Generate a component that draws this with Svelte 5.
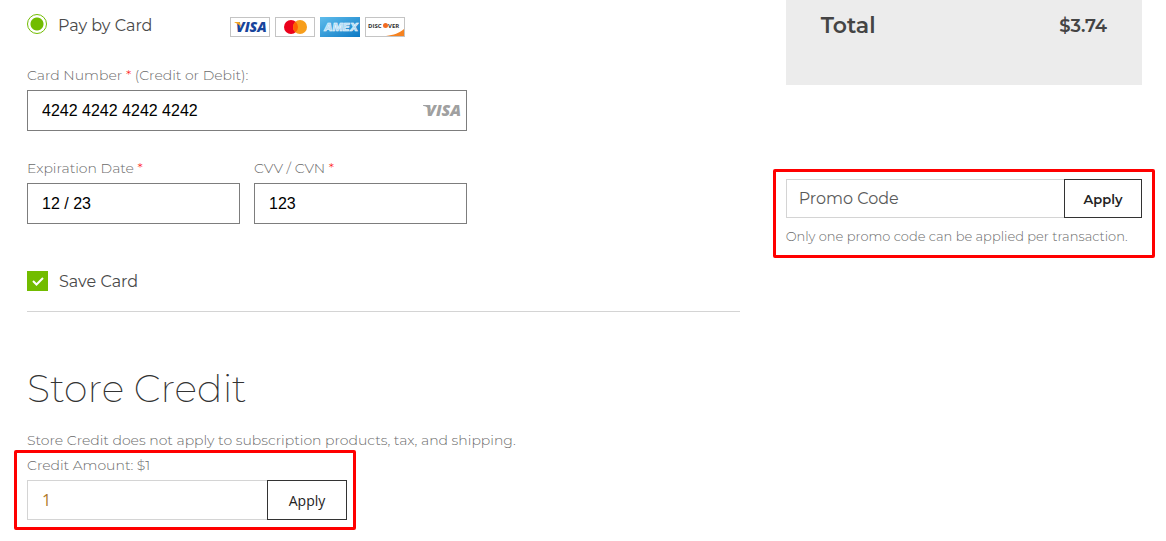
<script>
  let payMethod = $state('card');
  let cardNumber = $state('4242 4242 4242 4242');
  let expiration = $state('12 / 23');
  let cvv = $state('123');
  let saveCard = $state(true);
  let creditAmount = $state('1');
  let promoCode = $state('');

  const total = '$3.74';
  const availableCredit = '$1';
</script>

<div class="checkout">
  <main class="payment">
    <div class="method">
      <label class="choice">
        <input type="radio" name="method" value="card" bind:group={payMethod} />
        <span>Pay by Card</span>
      </label>

      <div class="brands">
        <svg class="brand" viewBox="0 0 40 20" role="img" aria-label="Visa">
          <rect x=".5" y=".5" width="39" height="19" fill="#fff" stroke="#c4c4c4" />
          <text x="6" y="15" class="visa" fill="#17449b">VISA</text>
          <path d="M4.500 5h5l2 5.500C9.500 8 7 6.300 4.500 5.600z" fill="#f7a823" />
        </svg>
        <svg class="brand" viewBox="0 0 40 20" role="img" aria-label="Mastercard">
          <rect x=".5" y=".5" width="39" height="19" fill="#fff" stroke="#c4c4c4" />
          <circle cx="16" cy="10" r="7" fill="#eb001b" />
          <circle cx="25" cy="10" r="7" fill="#f79e1b" />
          <path d="M20.500 4.640a7 7 0 0 1 0 10.720a7 7 0 0 1 0-10.720z" fill="#ff5f00" />
        </svg>
        <svg class="brand" viewBox="0 0 40 20" role="img" aria-label="American Express">
          <defs>
            <linearGradient id="amex" x1="0" y1="0" x2="1" y2="1">
              <stop offset="0" stop-color="#5fbdec" />
              <stop offset="1" stop-color="#0c79c4" />
            </linearGradient>
          </defs>
          <rect width="40" height="20" fill="url(#amex)" />
          <text x="4" y="14" class="amex">AMEX</text>
        </svg>
        <svg class="brand" viewBox="0 0 40 20" role="img" aria-label="Discover">
          <rect x=".5" y=".5" width="39" height="19" fill="#fff" stroke="#c4c4c4" />
          <path d="M39 12v7H21c8-1 13-3 18-7z" fill="#f58220" />
          <text x="3" y="11" class="discover">DISC</text>
          <circle cx="20.500" cy="8.500" r="2.500" fill="#f26b21" />
          <text x="23" y="11" class="discover">VER</text>
        </svg>
      </div>
    </div>

    <div class="card-fields">
      <div class="field wide">
        <label for="card-number">Card Number <em>*</em> (Credit or Debit):</label>
        <div class="stack">
          <input id="card-number" type="text" bind:value={cardNumber} />
          <svg class="detected" viewBox="0 0 46 28" role="img" aria-label="Visa">
            <text x="5" y="19" class="visa" fill="#a0a0a0">VISA</text>
            <path d="M2 8h6l2.500 7C9 11.500 6 9.500 2 8.700z" fill="#a0a0a0" />
          </svg>
        </div>
      </div>
      <div class="field">
        <label for="expiration">Expiration Date <em>*</em></label>
        <input id="expiration" type="text" bind:value={expiration} />
      </div>
      <div class="field">
        <label for="cvv">CVV / CVN <em>*</em></label>
        <input id="cvv" type="text" bind:value={cvv} />
      </div>
    </div>

    <label class="choice save">
      <span class="tick">
        <input type="checkbox" bind:checked={saveCard} />
        {#if saveCard}
          <svg viewBox="0 0 21 20" aria-hidden="true">
            <path d="M6 10l3.500 3.500L16 7" fill="none" stroke="#fff" stroke-width="2" />
          </svg>
        {/if}
      </span>
      <span>Save Card</span>
    </label>

    <hr />

    <section>
      <h2>Store Credit</h2>
      <p class="note">Store Credit does not apply to subscription products, tax, and shipping.</p>
      <div class="callout credit">
        <label for="credit">Credit Amount: {availableCredit}</label>
        <div class="apply-row">
          <input id="credit" type="text" bind:value={creditAmount} />
          <button type="button">Apply</button>
        </div>
      </div>
    </section>
  </main>

  <aside>
    <div class="summary">
      <span class="total">Total</span>
      <span class="amount">{total}</span>
    </div>

    <div class="callout promo">
      <div class="apply-row">
        <input type="text" placeholder="Promo Code" aria-label="Promo Code" bind:value={promoCode} />
        <button type="button">Apply</button>
      </div>
      <p>Only one promo code can be applied per transaction.</p>
    </div>
  </aside>
</div>

<style>
  :global(body) {
    margin: 0;
    background: #fff;
  }

  .checkout {
    display: grid;
    grid-template-columns: 2fr 1fr;
    column-gap: 46px;
    padding: 0 24px 0 27px;
    font-family: Montserrat, Inter, 'Open Sans', sans-serif;
    font-weight: 300;
    font-size: 14px;
    line-height: 20px;
    color: #6b6b6b;
  }

  .checkout * {
    box-sizing: border-box;
  }

  .payment {
    padding-top: 11px;
  }

  .method {
    display: flex;
    align-items: center;
    gap: 78px;
  }

  .choice {
    display: flex;
    align-items: center;
    gap: 11px;
    font-size: 16px;
    line-height: 22px;
    font-weight: 400;
    color: #4a4a4a;
  }

  .choice > span:last-child {
    padding-top: 3px;
  }

  input[type='radio'] {
    appearance: none;
    width: 20px;
    height: 20px;
    margin: 0;
    border: 1px solid #72bc00;
    border-radius: 50%;
    background: #fff;
  }

  input[type='radio']:checked {
    background: radial-gradient(circle, #72bc00 6px, #fff 7px);
  }

  .brands {
    display: flex;
    gap: 5px;
    padding-top: 6px;
  }

  .brand {
    display: block;
    width: 40px;
    height: 20px;
  }

  .visa {
    font: italic 800 14px 'Open Sans', sans-serif;
  }

  .detected .visa {
    font-size: 16px;
  }

  .amex {
    font: italic 800 11px Inter, 'Open Sans', sans-serif;
    fill: #a9d8f5;
    stroke: #fff;
    stroke-width: 0.5px;
  }

  .discover {
    font: 700 6px 'Open Sans', sans-serif;
    fill: #333;
  }

  .card-fields {
    display: grid;
    grid-template-columns: 1fr 1fr;
    gap: 27px 14px;
    max-width: 440px;
    margin-top: 28px;
  }

  .wide {
    grid-column: 1 / -1;
  }

  .field label,
  .credit label {
    display: block;
    margin-bottom: 5px;
  }

  em {
    color: #f22;
    font-style: normal;
  }

  input[type='text'] {
    width: 100%;
    height: 41px;
    padding: 0 14px;
    border: 1px solid #7d7d7d;
    border-radius: 0;
    background: #fff;
    color: #000;
    font: 16px 'Liberation Sans', Arial, sans-serif;
  }

  .stack,
  .tick {
    display: grid;
    align-items: center;
  }

  .stack > *,
  .tick > * {
    grid-area: 1 / 1;
  }

  .detected {
    width: 46px;
    height: 28px;
    justify-self: end;
  }

  .save {
    width: fit-content;
    margin-top: 44px;
  }

  input[type='checkbox'] {
    appearance: none;
    width: 21px;
    height: 20px;
    margin: 0;
    border: 1px solid #72bc00;
  }

  input[type='checkbox']:checked {
    background: #72bc00;
  }

  .tick svg {
    width: 21px;
    height: 20px;
    pointer-events: none;
  }

  hr {
    margin: 18px 0 53px;
    border: 0;
    border-top: 1px solid #d4d4d4;
  }

  h2 {
    margin: 0 0 17px;
    font-size: 38px;
    line-height: 48px;
    font-weight: 200;
    color: #333;
  }

  p {
    margin: 0;
  }

  .callout {
    border: 3px solid #f00;
    border-radius: 2px;
  }

  .credit {
    width: 342px;
    max-width: 100%;
    margin-left: -13px;
    padding: 2px 6px 7px 10px;
  }

  .apply-row {
    display: flex;
  }

  .apply-row input[type='text'] {
    flex: 1;
    min-width: 0;
    height: 40px;
    border-color: #d4d4d4;
    border-right: 0;
  }

  .apply-row button {
    width: 80px;
    padding: 0;
    border: 1px solid #333;
    background: #fff;
    color: #222;
    font: 14px 'Open Sans', sans-serif;
  }

  .credit input[type='text'] {
    font-family: 'Open Sans', sans-serif;
    color: #b07a2c;
  }

  .summary {
    display: flex;
    justify-content: space-between;
    align-items: center;
    padding: 10px 35px 43px;
    background: #ececec;
    color: #444;
    font-weight: 600;
    line-height: 32px;
  }

  .total {
    font-size: 22px;
  }

  .amount {
    font-size: 18px;
  }

  .promo {
    margin: 84px -13px 0;
    padding: 7px 10px 9px;
  }

  .promo .apply-row input[type='text'] {
    height: 39px;
    padding: 0 12px;
    font-family: inherit;
  }

  .promo input::placeholder {
    color: #5a5a5a;
    opacity: 1;
  }

  .promo .apply-row button {
    width: 78px;
    font-family: inherit;
    font-size: 13px;
    font-weight: 600;
  }

  .promo p {
    margin-top: 8px;
    font-size: 13px;
  }
</style>
